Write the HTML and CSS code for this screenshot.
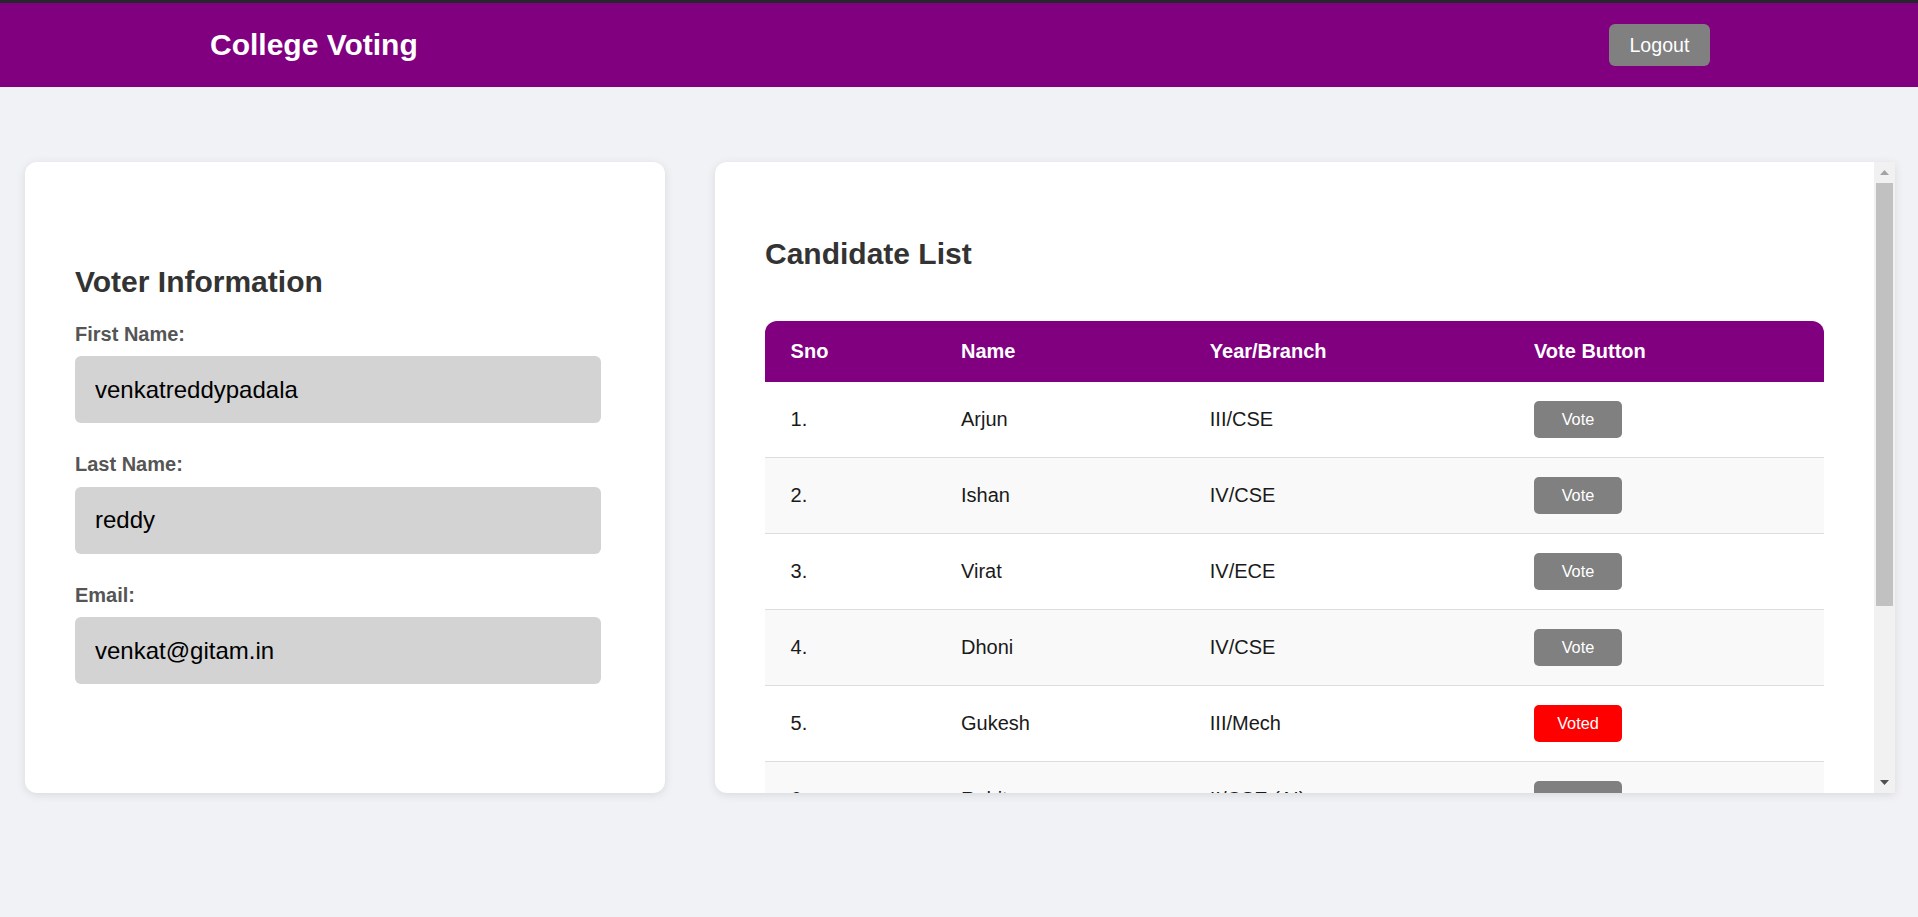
FILE: index.html
```html
<!DOCTYPE html>
<html lang="en">
<head>
<meta charset="utf-8">
<title>College Voting</title>
<link rel="stylesheet" href="styles.css">
</head>
<body>
<header class="topbar">
  <h1 class="brand">College Voting</h1>
  <button class="logout" type="button">Logout</button>
</header>
<main class="layout">
  <section class="card voter">
    <h2 class="card-title">Voter Information</h2>
    <div class="field">
      <label class="field-label" for="fname">First Name:</label>
      <input class="field-input" id="fname" type="text" value="venkatreddypadala" readonly>
    </div>
    <div class="field">
      <label class="field-label" for="lname">Last Name:</label>
      <input class="field-input" id="lname" type="text" value="reddy" readonly>
    </div>
    <div class="field">
      <label class="field-label" for="email">Email:</label>
      <input class="field-input" id="email" type="text" value="venkat@gitam.in" readonly>
    </div>
  </section>
  <section class="card candidates">
    <div class="cand-scroll">
      <h2 class="card-title list-title">Candidate List</h2>
      <table class="cand-table">
        <colgroup>
          <col class="col-sno">
          <col class="col-name">
          <col class="col-year">
          <col>
        </colgroup>
        <thead>
          <tr><th>Sno</th><th>Name</th><th>Year/Branch</th><th>Vote Button</th></tr>
        </thead>
        <tbody>
          <tr><td>1.</td><td>Arjun</td><td>III/CSE</td><td><button class="vote-btn" type="button">Vote</button></td></tr>
          <tr><td>2.</td><td>Ishan</td><td>IV/CSE</td><td><button class="vote-btn" type="button">Vote</button></td></tr>
          <tr><td>3.</td><td>Virat</td><td>IV/ECE</td><td><button class="vote-btn" type="button">Vote</button></td></tr>
          <tr><td>4.</td><td>Dhoni</td><td>IV/CSE</td><td><button class="vote-btn" type="button">Vote</button></td></tr>
          <tr><td>5.</td><td>Gukesh</td><td>III/Mech</td><td><button class="vote-btn voted" type="button">Voted</button></td></tr>
          <tr><td>6.</td><td>Rohit</td><td>II/CSE (AI)</td><td><button class="vote-btn" type="button">Vote</button></td></tr>
          <tr><td>7.</td><td>Sachin</td><td>IV/EEE</td><td><button class="vote-btn" type="button">Vote</button></td></tr>
          <tr><td>8.</td><td>Smriti</td><td>III/IT</td><td><button class="vote-btn" type="button">Vote</button></td></tr>
        </tbody>
      </table>
    </div>
    <div class="scrollbar" aria-hidden="true">
      <span class="sb-btn">
        <svg class="sb-arrow" width="9" height="5" viewBox="0 0 9 5"><polygon points="4.5,0 9,5 0,5" fill="#a3a3a3"/></svg>
      </span>
      <div class="sb-track"><span class="sb-thumb"></span></div>
      <span class="sb-btn">
        <svg class="sb-arrow" width="9" height="5" viewBox="0 0 9 5"><polygon points="0,0 9,0 4.5,5" fill="#505050"/></svg>
      </span>
    </div>
  </section>
</main>
</body>
</html>
```
FILE: styles.css
```css
* {
  box-sizing: border-box;
}

html,
body {
  margin: 0;
}

body {
  background: #f0f2f5;
  font-family: "Liberation Sans", Arial, sans-serif;
  height: 917px;
  overflow: hidden;
}

/* ---------- top bar ---------- */
.topbar {
  display: flex;
  align-items: center;
  justify-content: space-between;
  height: 87px;
  border-top: 3px solid #26262e;
  background: #800080;
  padding: 0 208px 0 210px;
}

.brand {
  margin: 0;
  color: #ffffff;
  font-size: 30px;
  line-height: 34px;
  font-weight: bold;
}

.logout {
  background: #808080;
  color: #ffffff;
  border: none;
  border-radius: 6px;
  font-family: inherit;
  font-size: 19.6px;
  line-height: 22px;
  padding: 10px 20.6px;
}

/* ---------- layout ---------- */
.layout {
  display: flex;
  gap: 50px;
  padding: 75px 23px 0 25px;
}

.card {
  background: #ffffff;
  height: 631px;
  box-shadow: 0 2px 10px rgba(0, 0, 0, 0.1);
}

.card-title {
  margin: 0 0 24.4px;
  font-size: 30px;
  line-height: 34px;
  font-weight: bold;
  color: #333333;
}

/* ---------- voter card ---------- */
.voter {
  width: 640px;
  flex: none;
  border-radius: 12px;
  display: flex;
  flex-direction: column;
  justify-content: center;
  padding: 50px 50px 56px;
}

.field + .field {
  margin-top: 30px;
}

.field-label {
  display: block;
  font-size: 20px;
  line-height: 23px;
  font-weight: bold;
  color: #555555;
  margin-bottom: 10.5px;
}

.field-input {
  display: block;
  width: 526px;
  height: 67px;
  border: none;
  border-radius: 6px;
  background: #d3d3d3;
  padding: 0 20px;
  font-family: inherit;
  font-size: 24px;
  color: #000000;
  outline: none;
}

/* ---------- candidates card ---------- */
.candidates {
  flex: 1;
  min-width: 0;
  display: flex;
  overflow: hidden;
  border-radius: 12px 0 0 12px;
}

.cand-scroll {
  flex: 1;
  min-width: 0;
  overflow-y: auto;
  scrollbar-width: none;
  padding: 50px;
}

.list-title {
  margin: 24.8px 0 50.2px;
}

.cand-table {
  width: 100%;
  border-collapse: separate;
  border-spacing: 0;
  table-layout: fixed;
  font-size: 20px;
}

.col-sno {
  width: 170.4px;
}

.col-name {
  width: 248.8px;
}

.col-year {
  width: 324.2px;
}

.cand-table th {
  background: #800080;
  color: #ffffff;
  text-align: left;
  font-weight: bold;
  height: 61px;
  padding: 0 25.6px;
  line-height: 23px;
}

.cand-table th:first-child {
  border-top-left-radius: 12px;
}

.cand-table th:last-child {
  border-top-right-radius: 12px;
}

.cand-table td {
  height: 76px;
  padding: 0 25.6px;
  border-bottom: 1px solid #dddddd;
  color: #1a1a1a;
  line-height: 23px;
  vertical-align: middle;
}

.cand-table tbody tr:nth-child(even) td {
  background: #f9f9f9;
}

.vote-btn {
  display: block;
  width: 88px;
  padding: 9.6px 0;
  border: none;
  border-radius: 5px;
  background: #808080;
  color: #ffffff;
  font-family: inherit;
  font-size: 16.3px;
  line-height: 18.7px;
  text-align: center;
}

.vote-btn.voted {
  background: #ff0000;
}

/* ---------- drawn scrollbar ---------- */
.scrollbar {
  width: 21px;
  flex: none;
  display: flex;
  flex-direction: column;
  background: #f1f1f1;
}

.sb-btn {
  height: 21px;
  flex: none;
  display: flex;
  align-items: center;
  justify-content: center;
}

.sb-arrow {
  display: block;
}

.sb-track {
  flex: 1;
  padding: 0 2px;
}

.sb-thumb {
  display: block;
  height: 423px;
  background: #c1c1c1;
}
```
